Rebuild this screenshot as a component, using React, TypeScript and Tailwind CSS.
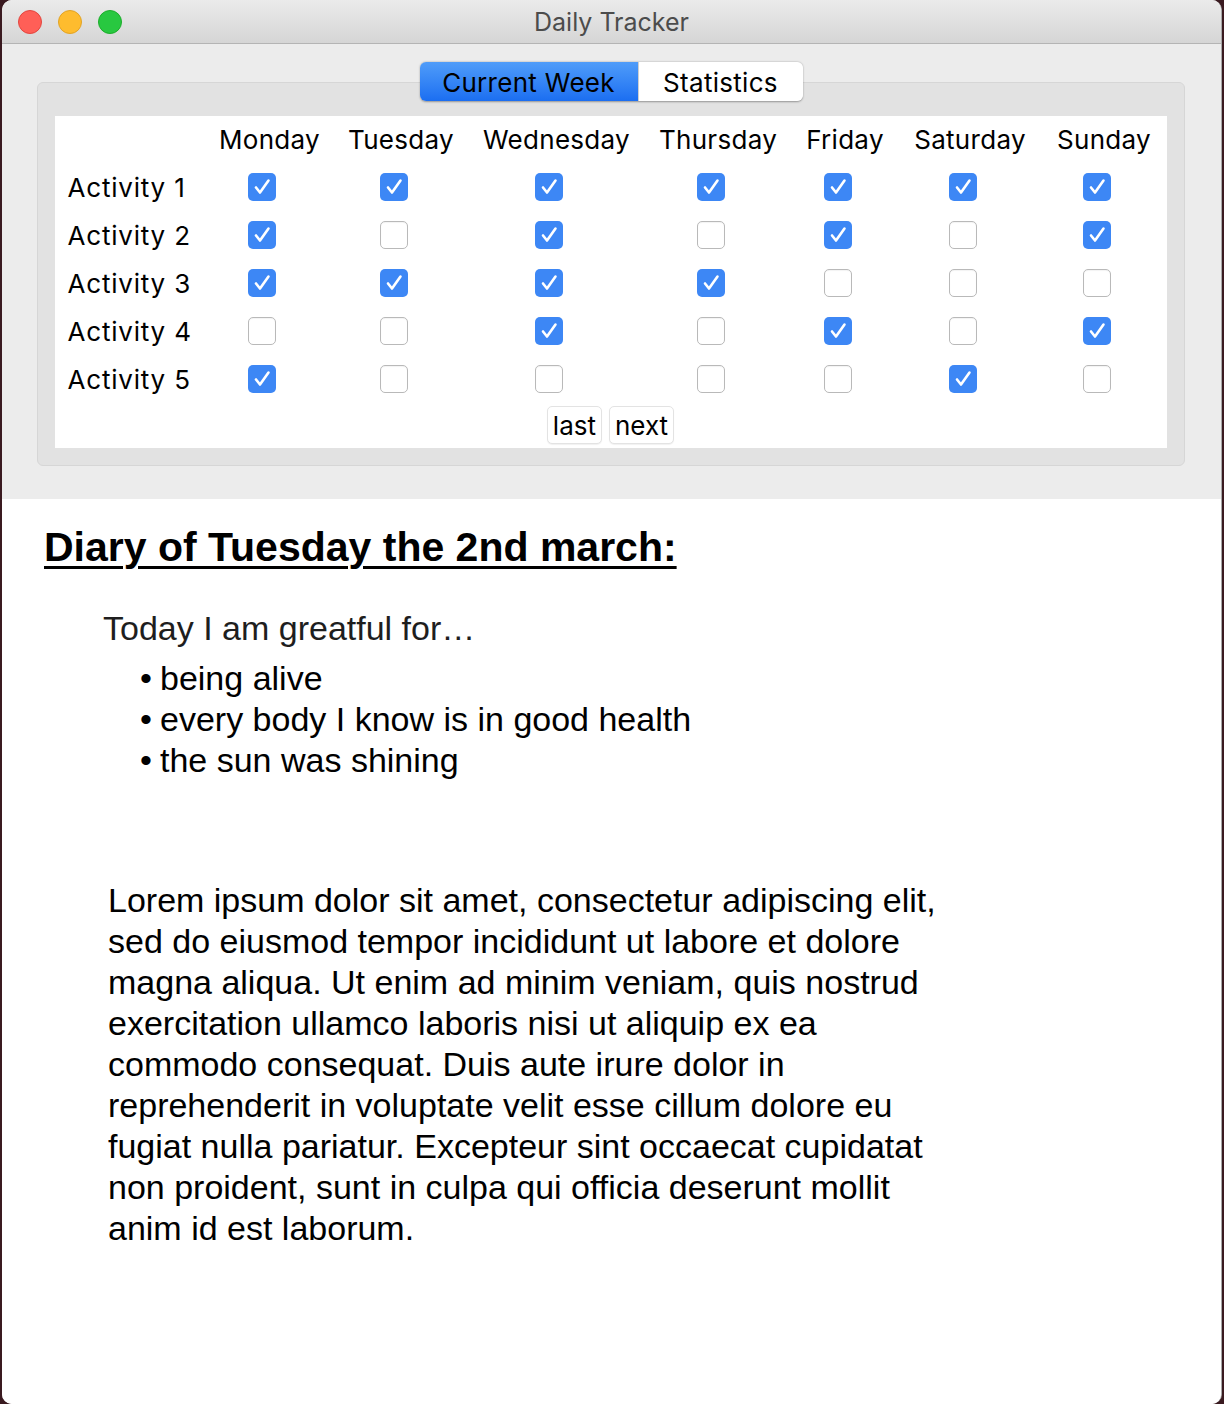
import React from "react";

const days = ["Monday", "Tuesday", "Wednesday", "Thursday", "Friday", "Saturday", "Sunday"];
const data: boolean[][] = [
  [true, true, true, true, true, true, true],
  [true, false, true, false, true, false, true],
  [true, true, true, true, false, false, false],
  [false, false, true, false, true, false, true],
  [true, false, false, false, false, true, false],
];

const lorem = [
  "Lorem ipsum dolor sit amet, consectetur adipiscing elit,",
  "sed do eiusmod tempor incididunt ut labore et dolore",
  "magna aliqua. Ut enim ad minim veniam, quis nostrud",
  "exercitation ullamco laboris nisi ut aliquip ex ea",
  "commodo consequat. Duis aute irure dolor in",
  "reprehenderit in voluptate velit esse cillum dolore eu",
  "fugiat nulla pariatur. Excepteur sint occaecat cupidatat",
  "non proident, sunt in culpa qui officia deserunt mollit",
  "anim id est laborum.",
];

function Box({ checked }: { checked: boolean }) {
  if (checked) {
    return (
      <div className="w-[28px] h-[28px] rounded-[5px] bg-[#3d87f5] flex items-center justify-center">
        <svg width="28" height="28" viewBox="0 0 28 28">
          <path d="M8 14.5 L12 19.5 L20.5 7.5" fill="none" stroke="white" strokeWidth="2.6" strokeLinecap="round" strokeLinejoin="round" />
        </svg>
      </div>
    );
  }
  return <div className="w-[28px] h-[28px] rounded-[5px] bg-white border border-[#b9b9b9] shadow-[inset_0_1px_1px_rgba(0,0,0,0.05)]" />;
}

const grid = "grid grid-cols-[151px_128px_135px_176px_147px_107px_143px_125px]";

export default function App() {
  return (
    <div className="w-[1224px] h-[1404px] bg-[#3a1a20] overflow-hidden">
      <div className="ml-[2px] w-[1220px] h-[1404px] rounded-[10px] overflow-hidden bg-white flex flex-col border-r border-[#a8a8a8]">
        {/* Title bar */}
        <div className="h-[44px] shrink-0 bg-gradient-to-b from-[#ebebeb] to-[#d5d5d5] border-b border-[#b4b4b4] flex items-center relative">
          <div className="flex gap-[16px] ml-[16px]">
            <div className="w-[24px] h-[24px] rounded-full bg-[#ff5f57] border border-[#e2463f]" />
            <div className="w-[24px] h-[24px] rounded-full bg-[#febc2e] border border-[#e1a325]" />
            <div className="w-[24px] h-[24px] rounded-full bg-[#28c840] border border-[#1dad2b]" />
          </div>
          <div className="absolute inset-0 pt-[3px] flex items-center justify-center font-['Inter',sans-serif] text-[25px] text-[#4c4c4c]">
            Daily Tracker
          </div>
        </div>

        {/* Gray top area */}
        <div className="bg-[#ececec] pt-[18px] pb-[33px] flex flex-col items-center font-['Inter',sans-serif] text-black">
          <div className="relative z-10 flex h-[39px] rounded-[6px] shadow-[0_0.5px_2px_rgba(0,0,0,0.35)] overflow-hidden text-[26px] ml-[-1px] tracking-[0.3px]">
            <div className="w-[218px] pt-[2px] flex items-center justify-center bg-gradient-to-b from-[#4f9cf9] to-[#1b6ef1]">Current Week</div>
            <div className="w-[165px] pt-[2px] flex items-center justify-center bg-white border-l border-[#cfcfcf]">Statistics</div>
          </div>
          <div className="-mt-[19px] w-[1148px] ml-[-2px] rounded-[6px] bg-[#e2e2e2] border border-[#d6d6d6] pt-[33px] px-[17px] pb-[17px]">
            <div className="bg-white h-[332px] text-[26px]">
              <div className={`${grid} h-[47px] items-center`}>
                <div />
                {days.map((d) => (
                  <div key={d} className="text-center tracking-[0.3px]">{d}</div>
                ))}
              </div>
              {data.map((row, i) => (
                <div key={i} className={`${grid} h-[48px] items-center`}>
                  <div className="pl-[13px] tracking-[0.8px]">Activity {i + 1}</div>
                  {row.map((c, j) => (
                    <div key={j} className="flex justify-center pr-[15px]">
                      <Box checked={c} />
                    </div>
                  ))}
                </div>
              ))}
              <div className="flex justify-center gap-[7px] pt-[3px]">
                <div className="h-[38px] px-[5px] flex items-center rounded-[5px] border border-[#e3e3e3] bg-white shadow-[0_1px_1px_rgba(0,0,0,0.06)]">last</div>
                <div className="h-[38px] px-[5px] flex items-center rounded-[5px] border border-[#e3e3e3] bg-white shadow-[0_1px_1px_rgba(0,0,0,0.06)]">next</div>
              </div>
            </div>
          </div>
        </div>

        {/* Diary */}
        <div className="flex-1 bg-white font-['Liberation_Sans',Arial,sans-serif] text-black pt-[24px]">
          <div className="ml-[42px] text-[41px] leading-[48px] font-bold underline decoration-[3px] underline-offset-[5px]">
            Diary of Tuesday the 2nd march:
          </div>
          <div className="ml-[101px] mt-[37px] text-[34px] leading-[41px] text-[#1e1e1e]">
            Today I am greatful for…
          </div>
          <ul className="ml-[138px] mt-[9px] text-[34px] leading-[41px]">
            {["being alive", "every body I know is in good health", "the sun was shining"].map((t) => (
              <li key={t} className="flex">
                <span className="w-[20px]">•</span>
                <span>{t}</span>
              </li>
            ))}
          </ul>
          <div className="ml-[106px] mt-[99px] text-[34px] leading-[41px]">
            {lorem.map((l) => (
              <div key={l}>{l}</div>
            ))}
          </div>
        </div>
      </div>
    </div>
  );
}
